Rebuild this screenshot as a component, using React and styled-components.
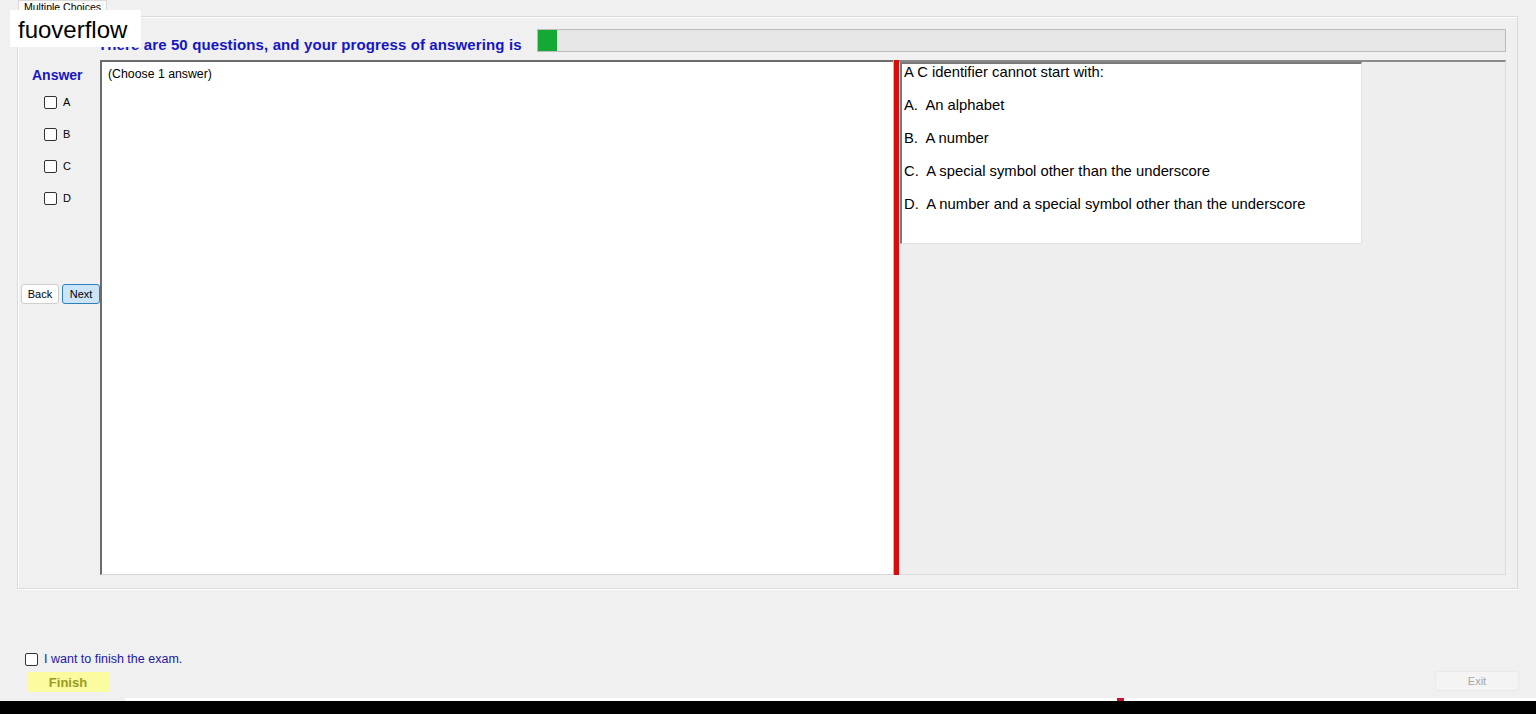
import React, { useState } from "react";
import styled, { createGlobalStyle } from "styled-components";

const GlobalStyle = createGlobalStyle`
	html, body {
		margin: 0;
		padding: 0;
		background: #f0f0f0;
		font-family: "Liberation Sans", Arial, sans-serif;
	}
`;

const Page = styled.div`
	position: relative;
	height: 714px;
	display: flex;
	flex-flow: column nowrap;
	background: #f0f0f0;
	overflow: hidden;
`;

const TabStrip = styled.div`
	height: 16px;
	display: flex;
	padding-left: 18px;
`;

const Tab = styled.div`
	height: 16px;
	padding: 0 5px;
	font-size: 10.5px;
	line-height: 13px;
	color: #000;
	background: #fafafa;
	border: 1px solid #d9d9d9;
	border-bottom: none;
	box-sizing: border-box;
`;

const TabPanel = styled.div`
	margin: 0 18px 0 17px;
	height: 573px;
	box-sizing: border-box;
	border: 1px solid #dadada;
	box-shadow: inset 1px 1px 0 #fff, 0 1px 0 #fff;
	display: flex;
	flex-flow: column nowrap;
	padding: 12px 11px 13px 0;
`;

const HeaderRow = styled.div`
	display: flex;
	align-items: center;
	height: 23px;
	padding-left: 80px;
	margin-bottom: 8px;
`;

const Heading = styled.h2`
	margin: 0 15px 0 0;
	padding-top: 7px;
	font-size: 15px;
	letter-spacing: 0.12px;
	font-weight: 700;
	color: #1616c4;
	white-space: nowrap;
`;

const Progress = styled.div`
	flex: 1;
	height: 23px;
	box-sizing: border-box;
	background: #e6e6e6;
	border: 1px solid #bcbcbc;
	display: flex;
`;

const ProgressFill = styled.div`
	background: #14a834;
	height: 100%;
`;

const BodyRow = styled.div`
	flex: 1;
	display: flex;
	min-height: 0;
`;

const Sidebar = styled.div`
	width: 82px;
	display: flex;
	flex-flow: column nowrap;
	padding-left: 3px;
	box-sizing: border-box;
`;

const AnswerTitle = styled.div`
	font-size: 14px;
	font-weight: 700;
	color: #1616c4;
	padding: 7px 0 0 11px;
	height: 24px;
`;

const ChoiceList = styled.div`
	display: flex;
	flex-flow: column nowrap;
	gap: 18px;
	padding: 4px 0 0 23px;
`;

const ChoiceRow = styled.label`
	display: flex;
	align-items: center;
	gap: 6px;
	height: 14px;
	font-size: 11px;
	color: #000;
`;

const Box = styled.input.attrs({ type: "checkbox" })`
	width: 13px;
	height: 13px;
	margin: 0;
	appearance: none;
	border: 1px solid #333;
	border-radius: 2px;
	background: #fff;
	box-sizing: border-box;
	&:checked {
		background: #0067c0;
		border-color: #0067c0;
	}
`;

const NavRow = styled.div`
	display: flex;
	gap: 3px;
	margin-top: 79px;
`;

const NavButton = styled.button`
	width: 38px;
	height: 20px;
	padding: 0;
	font-family: "Liberation Sans", Arial, sans-serif;
	font-size: 11px;
	color: #000;
	border-radius: 3px;
	border: 1px solid ${pr => (pr.$active ? "#2f7fbf" : "#cfcfcf")};
	background: ${pr => (pr.$active ? "#cce4f7" : "#fdfdfd")};
`;

const Editor = styled.div`
	width: 793px;
	box-sizing: border-box;
	background: #fff;
	border-top: 2px solid #6c6c6c;
	border-left: 2px solid #6c6c6c;
	border-bottom: 1px solid #d7d7d7;
	padding: 5px 6px;
	font-size: 12.3px;
	color: #000;
`;

const Splitter = styled.div`
	width: 6px;
	background: #d90c0c;
	border-left: 1px solid #f4a0a0;
	box-sizing: border-box;
`;

const QuestionPane = styled.div`
	flex: 1;
	background: #eeeeee;
	border-top: 2px solid #8a8a8a;
	border-right: 1px solid #dcdcdc;
	border-bottom: 1px solid #dcdcdc;
	padding-left: 1px;
`;

const QuestionBox = styled.div`
	width: 462px;
	height: 182px;
	box-sizing: border-box;
	background: #fff;
	border-top: 2px solid #7a7a7a;
	border-left: 2px solid #7a7a7a;
	border-right: 1px solid #e2e2e2;
	border-bottom: 1px solid #e2e2e2;
	padding: 0 2px;
`;

const QuestionLine = styled.p`
	margin: 0;
	height: 33px;
	line-height: 17px;
	font-size: 14.8px;
	color: #000;
	white-space: pre;
`;

const Footer = styled.div`
	flex: 1;
	display: flex;
	align-items: flex-end;
	justify-content: space-between;
	padding: 0 17px 6px 25px;
`;

const FinishBlock = styled.div`
	display: flex;
	flex-flow: column nowrap;
	gap: 6px;
`;

const ConfirmRow = styled.label`
	display: flex;
	align-items: center;
	gap: 6px;
	font-size: 12.5px;
	color: #2418a6;
`;

const FinishButton = styled.button`
	width: 82px;
	height: 20px;
	margin-left: 2px;
	border: none;
	background: #fbfba0;
	color: #9a9a22;
	font-family: "Liberation Sans", Arial, sans-serif;
	font-weight: 700;
	font-size: 13px;
	padding: 0;
`;

const ExitButton = styled.button`
	width: 84px;
	height: 20px;
	margin-bottom: 1px;
	border: 1px solid #e9e9e9;
	border-radius: 3px;
	background: #f4f4f4;
	color: #a6a6a6;
	font-family: "Liberation Sans", Arial, sans-serif;
	font-size: 11px;
	padding: 0;
`;

const TaskEdge = styled.div`
	height: 3px;
	margin-left: 125px;
	background: #fff;
	display: flex;
	justify-content: flex-start;
	span {
		margin-left: 992px;
		width: 7px;
		background: #c4102c;
	}
`;

const TaskBar = styled.div`
	height: 13px;
	background: #000;
`;

const Watermark = styled.div`
	position: absolute;
	left: 10px;
	top: 10px;
	width: 131px;
	height: 37px;
	background: #fff;
	font-size: 24px;
	line-height: 40px;
	padding-left: 8px;
	box-sizing: border-box;
	color: #000;
`;

const choices = ["A", "B", "C", "D"];

const question = [
	"A C identifier cannot start with:",
	"A.  An alphabet",
	"B.  A number",
	"C.  A special symbol other than the underscore",
	"D.  A number and a special symbol other than the underscore",
];

const App = () => {
	const [picked, setPicked] = useState({});
	const [done, setDone] = useState(false);
	const answered = 1;
	const total = 50;

	return (
		<Page>
			<GlobalStyle />
			<TabStrip>
				<Tab>Multiple Choices</Tab>
			</TabStrip>
			<TabPanel>
				<HeaderRow>
					<Heading>There are {total} questions, and your progress of answering is</Heading>
					<Progress>
						<ProgressFill style={{ width: `${(answered / total) * 100}%` }} />
					</Progress>
				</HeaderRow>
				<BodyRow>
					<Sidebar>
						<AnswerTitle>Answer</AnswerTitle>
						<ChoiceList>
							{choices.map(c => (
								<ChoiceRow key={c}>
									<Box
										checked={!!picked[c]}
										onChange={e => setPicked({ ...picked, [c]: e.target.checked })}
									/>
									{c}
								</ChoiceRow>
							))}
						</ChoiceList>
						<NavRow>
							<NavButton>Back</NavButton>
							<NavButton $active>Next</NavButton>
						</NavRow>
					</Sidebar>
					<Editor>(Choose 1 answer)</Editor>
					<Splitter />
					<QuestionPane>
						<QuestionBox>
							{question.map(line => (
								<QuestionLine key={line}>{line}</QuestionLine>
							))}
						</QuestionBox>
					</QuestionPane>
				</BodyRow>
			</TabPanel>
			<Footer>
				<FinishBlock>
					<ConfirmRow>
						<Box checked={done} onChange={e => setDone(e.target.checked)} />
						I want to finish the exam.
					</ConfirmRow>
					<FinishButton>Finish</FinishButton>
				</FinishBlock>
				<ExitButton disabled>Exit</ExitButton>
			</Footer>
			<TaskEdge>
				<span />
			</TaskEdge>
			<TaskBar />
			<Watermark>fuoverflow</Watermark>
		</Page>
	);
};

export default App;
